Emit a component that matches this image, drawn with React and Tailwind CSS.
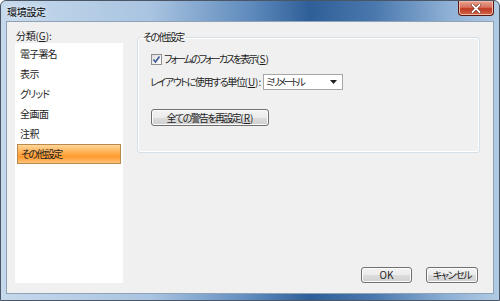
import React from "react"

const items = [
  ["電子署名", "tracking-[-0.8px]"],
  ["表示", "tracking-[-0.5px]"],
  ["グリッド", "tracking-[-1px]"],
  ["全画面", "tracking-[-0.5px]"],
  ["注釈", "tracking-[-0.5px]"],
]

// mnemonic key, e.g. (S)
function Key({ k }) {
  return (
    <span className="tracking-normal">
      (<u>{k}</u>)
    </span>
  )
}

function Btn({ children, className }) {
  return (
    <button
      className={
        "flex items-center justify-center rounded-[3px] border border-[#707070] bg-[linear-gradient(#f3f3f3_0%,#ebebeb_50%,#dddddd_51%,#cfcfcf_100%)] text-[10px] leading-none text-[#1e1e1e] shadow-[inset_0_0_0_1px_#fcfcfc] " +
        className
      }
    >
      {children}
    </button>
  )
}

export default function App() {
  return (
    <div className="flex h-[301px] w-[500px] flex-col overflow-hidden rounded-t-[6px] border border-[#4a5666] bg-[linear-gradient(90deg,#c6d9ec_0%,#a9c4e1_30%,#5f8bbd_50%,#2f5f98_62%,#4a78ad_75%,#8fb1d6_90%,#b2cbe4_100%)] font-['Noto_Sans_CJK_JP',sans-serif] [font-feature-settings:'palt'] text-[#1e1e1e]">
      {/* title bar */}
      <div className="flex h-[20px] shrink-0 items-start justify-between pl-[6px] pr-[5px]">
        <div className="mt-[4px] text-[10px] leading-[13px] tracking-[-0.3px] text-black [text-shadow:0_0_6px_#ffffff]">環境設定</div>
        <div className="flex h-[15px] w-[36px] items-center justify-center rounded-b-[4px] border border-t-0 border-[#5a1a12] bg-[linear-gradient(#e9a493_0%,#d8705a_45%,#c03a22_55%,#d2664a_100%)] shadow-[inset_0_0_0_1px_#f0b8a8]">
          <svg width="10" height="9" viewBox="0 0 10 9">
            <path d="M1.5 1 L8.5 8 M8.5 1 L1.5 8" stroke="#5a2018" strokeWidth="3" strokeLinecap="square" />
            <path d="M1.5 1 L8.5 8 M8.5 1 L1.5 8" stroke="#ffffff" strokeWidth="1.8" strokeLinecap="square" />
          </svg>
        </div>
      </div>

      {/* client area */}
      <div className="mx-[5px] mb-[6px] flex flex-1 border border-[#8ea2b8] bg-[#f0f0f0] pb-[10px] pl-[8px] pr-[13px] pt-[6px]">
        {/* category list */}
        <div className="flex w-[108px] flex-col">
          <div className="h-[15px] pl-[1px] text-[10px] leading-[15px] tracking-[-0.3px]">
            分類<Key k="G" />:
          </div>
          <div className="flex-1 bg-white pt-[1px]">
            {items.map(([t, tr]) => (
              <div key={t} className={"h-[20px] pl-[5px] text-[10px] leading-[20px] " + tr}>
                {t}
              </div>
            ))}
            <div className="mx-[2px] h-[20px] border border-[#b98a4c] bg-[linear-gradient(#ffd79a_0%,#ffb45c_35%,#ff9a2e_65%,#ffc27a_100%)] pl-[3px] text-[10px] leading-[18px] tracking-[-1.6px]">
              その他設定
            </div>
          </div>
        </div>

        {/* settings */}
        <div className="ml-[14px] flex flex-1 flex-col">
          <fieldset className="mt-[3px] rounded-[3px] border border-[#d5dfe5] pb-[26px] pl-[13px] pt-[9px] shadow-[inset_0_0_0_1px_#ffffff]">
            <legend className="-ml-[10px] px-[2px] text-[10px] leading-[12px] tracking-[-1.6px]">その他設定</legend>
            <div className="flex h-[14px] items-center">
              <div className="flex h-[11px] w-[11px] items-center justify-center border border-[#8f8f8f] bg-[linear-gradient(135deg,#dcdcdc,#ffffff)]">
                <svg width="9" height="9" viewBox="0 0 9 9">
                  <path d="M1.5 4.5 L3.5 7 L7.5 1.5" fill="none" stroke="#3c5a9a" strokeWidth="1.6" />
                </svg>
              </div>
              <span className="ml-[2px] text-[10px] leading-none tracking-[-2px]">
                フォームのフォーカスを表示<Key k="S" />
              </span>
            </div>
            <div className="-ml-[1px] mt-[8px] flex h-[16px] items-center">
              <span className="text-[10px] leading-none tracking-[-1.4px]">
                レイアウトに使用する単位<Key k="U" />:
              </span>
              <div className="ml-[3px] flex h-[16px] w-[80px] items-center justify-between border border-[#a6a6a6] bg-white pl-[2px] pr-[5px] text-[10px] leading-none">
                <span className="tracking-[-2.4px]">ミリメートル</span>
                <svg width="7" height="4" viewBox="0 0 7 4">
                  <path d="M0 0 H7 L3.5 4 Z" fill="#1e1e1e" />
                </svg>
              </div>
            </div>
            <Btn className="mt-[19px] h-[17px] w-[118px] tracking-[-1.6px]">
              全ての警告を再設定<Key k="R" />
            </Btn>
          </fieldset>

          <div className="mr-[2px] mt-auto flex justify-end gap-[14px]">
            <Btn className="h-[16px] w-[51px]">OK</Btn>
            <Btn className="h-[16px] w-[52px] tracking-[-1.4px]">キャンセル</Btn>
          </div>
        </div>
      </div>
    </div>
  )
}
